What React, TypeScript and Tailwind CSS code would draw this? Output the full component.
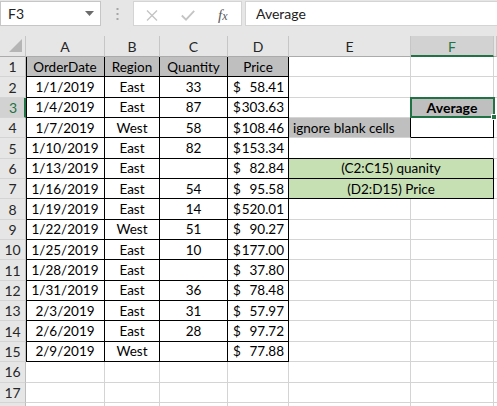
import * as React from 'react';

const FONT = { fontFamily: 'Lato, "Open Sans", sans-serif' };

type Row = [string, string, string, string];

const data: Row[] = [
  ['1/1/2019', 'East', '33', '58.41'],
  ['1/4/2019', 'East', '87', '303.63'],
  ['1/7/2019', 'West', '58', '108.46'],
  ['1/10/2019', 'East', '82', '153.34'],
  ['1/13/2019', 'East', '', '82.84'],
  ['1/16/2019', 'East', '54', '95.58'],
  ['1/19/2019', 'East', '14', '520.01'],
  ['1/22/2019', 'West', '51', '90.27'],
  ['1/25/2019', 'East', '10', '177.00'],
  ['1/28/2019', 'East', '', '37.80'],
  ['1/31/2019', 'East', '36', '78.48'],
  ['2/3/2019', 'East', '31', '57.97'],
  ['2/6/2019', 'East', '28', '97.72'],
  ['2/9/2019', 'West', '', '77.88'],
];

const cols = ['A', 'B', 'C', 'D', 'E', 'F', ''];

function FormulaBar() {
  return (
    <div className="flex h-[36px] items-start bg-[#e6e6e6] pt-[1px]">
      {/* name box */}
      <div className="flex h-[25px] w-[101px] items-center justify-between border border-[#c6c6c6] bg-white pl-[7px] pr-[6px]">
        <span className="text-[14px] text-[#222]">F3</span>
        <svg width="9" height="5" viewBox="0 0 9 5">
          <path d="M0 0h9L4.5 5z" fill="#6b6b6b" />
        </svg>
      </div>
      <div className="flex h-[25px] w-[32px] items-center justify-center">
        <svg width="3" height="12" viewBox="0 0 3 12">
          <rect x="0.5" y="0" width="2" height="2" fill="#a6a6a6" />
          <rect x="0.5" y="5" width="2" height="2" fill="#a6a6a6" />
          <rect x="0.5" y="10" width="2" height="2" fill="#a6a6a6" />
        </svg>
      </div>
      {/* cancel / enter / fx */}
      <div className="relative h-[25px] w-[109px] border border-[#d4d4d4] bg-white">
        <svg className="absolute left-[12px] top-[8px]" width="12" height="11" viewBox="0 0 12 11">
          <path d="M1 0.5L11 10.5M11 0.5L1 10.5" stroke="#c4c4c4" strokeWidth="1.4" />
        </svg>
        <svg className="absolute left-[47px] top-[8px]" width="14" height="11" viewBox="0 0 14 11">
          <path d="M0.8 5.5L5 9.6L13.2 0.8" stroke="#c4c4c4" strokeWidth="1.8" fill="none" />
        </svg>
        <span
          className="absolute left-[84px] top-[2px] text-[15px] italic text-[#5a5a5a]"
          style={{ fontFamily: '"Liberation Serif", serif' }}
        >
          f<span className="text-[12px]">x</span>
        </span>
      </div>
      <div className="ml-[3px] flex h-[25px] flex-1 items-center border border-r-0 border-[#d4d4d4] bg-white pl-[10px]">
        <span className="text-[14px] text-[#222]">Average</span>
      </div>
    </div>
  );
}

function Corner() {
  return (
    <div className="relative border-b border-r border-b-[#ababab] border-r-[#c6c6c6] bg-[#e6e6e6]">
      <svg className="absolute bottom-[4px] right-[3px]" width="13" height="13" viewBox="0 0 13 13">
        <path d="M13 0V13H0z" fill="#b5b5b5" />
      </svg>
    </div>
  );
}

function Sheet() {
  const cells: React.ReactNode[] = [];

  // column header row
  cells.push(<Corner key="corner" />);
  cols.forEach((c) => {
    const selected = c === 'F';
    cells.push(
      <div
        key={`h-${c || 'G'}`}
        className={
          selected
            ? 'flex items-center justify-center border-b-2 border-r border-b-[#217346] border-r-[#c6c6c6] bg-[#d2d2d2] pt-[1px] text-[14px] text-[#217346]'
            : 'flex items-center justify-center border-b border-r border-b-[#ababab] border-r-[#c6c6c6] bg-[#e6e6e6] text-[14px] text-[#262626]'
        }
      >
        {c}
      </div>
    );
  });

  for (let r = 1; r <= 18; r++) {
    const rowSel = r === 3;
    cells.push(
      <div
        key={`rh-${r}`}
        className={
          rowSel
            ? 'flex items-center justify-center border-b border-r-2 border-b-[#d4d4d4] border-r-[#217346] bg-[#d2d2d2] pl-[2px] text-[14px] text-[#217346]'
            : 'flex items-center justify-center border-b border-r border-b-[#d4d4d4] border-r-[#bdbdbd] bg-[#e6e6e6] text-[14px] text-[#262626]'
        }
      >
        {r <= 17 ? r : ''}
      </div>
    );

    const inTable = r <= 15;
    const row: Row | null = r === 1 ? null : inTable ? data[r - 2] : null;

    // A-D
    for (let c = 0; c < 4; c++) {
      if (!inTable) {
        cells.push(<div key={`${r}-${c}`} className="border-b border-r border-[#d4d4d4]" />);
        continue;
      }
      const left = c === 0 ? ' shadow-[inset_1px_0_0_#000]' : '';
      if (r === 1) {
        const heads = ['OrderDate', 'Region', 'Quantity', 'Price'];
        cells.push(
          <div
            key={`${r}-${c}`}
            className={`flex items-center justify-center border-b border-r border-black bg-[#bfbfbf] text-[13.5px] text-black${left}`}
          >
            {heads[c]}
          </div>
        );
      } else if (c === 3) {
        cells.push(
          <div
            key={`${r}-${c}`}
            className="flex items-center justify-between border-b border-r border-black pl-[5px] pr-[4px] text-[13.5px] text-black"
          >
            <span>$</span>
            <span>{row![3]}</span>
          </div>
        );
      } else {
        cells.push(
          <div
            key={`${r}-${c}`}
            className={`flex items-center justify-center border-b border-r border-black text-[13.5px] text-black${left}`}
          >
            {row![c]}
          </div>
        );
      }
    }

    // E, F
    if (r === 6 || r === 7) {
      cells.push(
        <div
          key={`${r}-EF`}
          className="col-span-2 flex items-center justify-center border-b border-r border-black bg-[#c6e0b4] text-[13.5px] text-black"
        >
          {r === 6 ? '(C2:C15) quanity' : '(D2:D15) Price'}
        </div>
      );
    } else if (r === 3) {
      cells.push(<div key={`${r}-E`} className="border-b border-r border-[#d4d4d4]" />);
      cells.push(
        <div
          key={`${r}-F`}
          className="relative flex items-center justify-center border-b border-r border-black bg-[#bfbfbf] text-[14px] font-bold text-black"
        >
          Average
          <div className="pointer-events-none absolute -left-[1px] -top-[1px] bottom-[-1px] right-[-2px] border-2 border-[#217346]" />
          <div className="absolute -bottom-[3px] -right-[4px] h-[6px] w-[6px] border border-white bg-[#217346]" />
        </div>
      );
    } else if (r === 4) {
      cells.push(
        <div
          key={`${r}-E`}
          className="flex items-center border-b border-r border-b-[#d4d4d4] border-r-black bg-[#bfbfbf] pl-[4px] text-[13.5px] text-black"
        >
          ignore blank cells
        </div>
      );
      cells.push(<div key={`${r}-F`} className="border-b border-r border-black" />);
    } else if (r === 5) {
      cells.push(<div key={`${r}-E`} className="border-b border-r border-b-black border-r-[#d4d4d4]" />);
      cells.push(<div key={`${r}-F`} className="border-b border-r border-b-black border-r-[#d4d4d4]" />);
    } else {
      cells.push(<div key={`${r}-E`} className="border-b border-r border-[#d4d4d4]" />);
      cells.push(<div key={`${r}-F`} className="border-b border-r border-[#d4d4d4]" />);
    }

    // G sliver
    cells.push(<div key={`${r}-G`} className="border-b border-[#d4d4d4]" />);
  }

  return (
    <div className="grid grid-cols-[26px_79px_55px_68px_61px_122px_83px_1fr] grid-rows-[21px_repeat(18,20.35px)] bg-white">
      {cells}
    </div>
  );
}

export default function App() {
  return (
    <div className="h-[406px] w-[497px] overflow-hidden bg-white" style={FONT}>
      <FormulaBar />
      <Sheet />
    </div>
  );
}
